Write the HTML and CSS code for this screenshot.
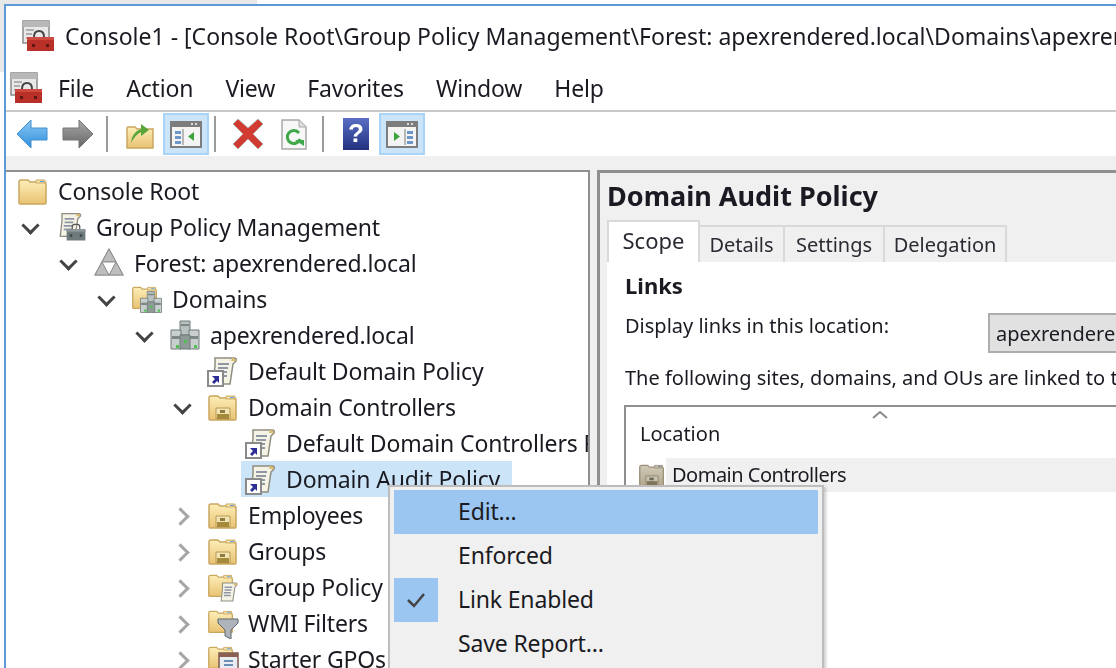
FILE: index.html
```html
<!DOCTYPE html>
<html lang="en">
<head>
  <meta charset="UTF-8" />
  <title>Console1 - Group Policy Management</title>
  <link rel="stylesheet" href="styles.css">
</head>
<body>
  <svg class="defs" width="0" height="0">
    <defs>
      <linearGradient id="folderFill" x1="0" y1="0" x2="0" y2="1">
        <stop offset="0" stop-color="#fdeeb8"/>
        <stop offset="1" stop-color="#e9c273"/>
      </linearGradient>
      <linearGradient id="blueArrow" x1="0" y1="0" x2="0" y2="1">
        <stop offset="0" stop-color="#8cc8f4"/>
        <stop offset="1" stop-color="#2f8fdc"/>
      </linearGradient>
      <linearGradient id="grayArrow" x1="0" y1="0" x2="0" y2="1">
        <stop offset="0" stop-color="#a8a8a8"/>
        <stop offset="1" stop-color="#666"/>
      </linearGradient>
      <linearGradient id="helpFill" x1="0" y1="0" x2="0" y2="1">
        <stop offset="0" stop-color="#5a6fc4"/>
        <stop offset="1" stop-color="#22307f"/>
      </linearGradient>
      <symbol id="folder" viewBox="0 0 32 32">
        <path d="M2 7q0-2 2-2h7l2 2h14q2 0 2 2v19q0 1-1 1H3q-1 0-1-1z" fill="url(#folderFill)" stroke="#c9a862" stroke-width="1.5"/>
        <path d="M19 5h9v3h-9z" fill="#f6e4ab" stroke="#c9a862"/>
        <path d="M23 6h4v1h-4z" fill="#5a9fe0"/>
      </symbol>
      <symbol id="ou" viewBox="0 0 32 32">
        <use href="#folder"/>
        <path d="M9 17h14v11H9z" fill="#f2e3b4" stroke="#b99c55"/>
        <path d="M10 23h12v5H10z" fill="#a58a3c"/>
        <path d="M13 19h5v3h-5z" fill="#8e7a3a"/>
      </symbol>
      <symbol id="servers" viewBox="0 0 32 32">
        <g stroke="#6f7a78" stroke-width="1">
          <path d="M11 2h10v14H11z" fill="#b9c0bf"/>
          <path d="M2 11h10v19H2z" fill="#c9cfce"/>
          <path d="M20 11h10v19H20z" fill="#c9cfce"/>
          <path d="M11 16h10v14H11z" fill="#8f9a98"/>
        </g>
        <path d="M3 17h8v3H3zM21 17h8v3h-8zM12 5h8v2h-8z" fill="#7d8886"/>
        <path d="M7 26h3v3H7zM25 26h3v3h-3zM15 21h3v3h-3z" fill="#4fc24f"/>
      </symbol>
      <symbol id="scroll" viewBox="0 0 32 32">
        <path d="M8 3h19q3 0 2 3l-3 3-3 20H6l2-18z" fill="#f5f3e6" stroke="#8d8d80" stroke-width="1.5"/>
        <path d="M25 3q4 0 4 3h-5z" fill="#d9b96a"/>
        <path d="M11 9h11M11 13h10M10 17h10M10 21h10" stroke="#8f97a5" stroke-width="2"/>
      </symbol>
      <symbol id="gpo-link" viewBox="0 0 32 32">
        <use href="#scroll"/>
        <path d="M1 16h15v15H1z" fill="#fff" stroke="#8a8a8a" stroke-width="2"/>
        <path d="M5 21h7v7l-2-2-3 3-2-2 3-3z" fill="#2d2d96"/>
      </symbol>
      <symbol id="toolbox" viewBox="0 0 32 32">
        <path d="M10 10V6q0-4 4-4h4q4 0 4 4v4" fill="none" stroke="#555" stroke-width="2"/>
        <path d="M1 10h30v18H1z" fill="#6f7a7c"/>
        <path d="M1 10h30v4H1z" fill="#8d9799"/>
        <path d="M6 18h4v4H6zM22 18h4v4h-4z" fill="#3c4446"/>
      </symbol>
      <symbol id="app" viewBox="0 0 32 32">
        <path d="M1 1h26v22H1z" fill="#e8e8e8" stroke="#8a8a8a" stroke-width="1.5"/>
        <path d="M1 1h26v6H1z" fill="#b8b8b8"/>
        <path d="M4 10h8M4 14h6M4 18h6" stroke="#9b9b9b" stroke-width="1.5"/>
        <path d="M12 17q0-6 5-6t5 6" fill="none" stroke="#444" stroke-width="2"/>
        <path d="M5 17h27v14H5z" fill="#b93029"/>
        <path d="M5 17h27v3H5z" fill="#cf4a40"/>
        <path d="M10 24h3v3h-3zM24 24h3v3h-3z" fill="#5e1714"/>
      </symbol>
      <symbol id="window" viewBox="0 0 32 28">
        <path d="M1 2h30v25H1z" fill="#f4f4f4" stroke="#7d7d7d" stroke-width="2"/>
        <path d="M1 2h30v5H1z" fill="#7d7d7d"/>
        <path d="M25 3h2v2h-2zM21 3h2v2h-2z" fill="#ddd"/>
      </symbol>
    </defs>
  </svg>

  <div class="backdrop"></div>

  <div class="window">
    <div class="titlebar">
      <svg class="icon-app"><use href="#app"/></svg>
      <span class="title">Console1 - [Console Root\Group Policy Management\Forest: apexrendered.local\Domains\apexrendered.local\Domain Controllers]</span>
    </div>

    <div class="menubar">
      <svg class="icon-app"><use href="#app"/></svg>
      <span>File</span>
      <span>Action</span>
      <span>View</span>
      <span>Favorites</span>
      <span>Window</span>
      <span>Help</span>
    </div>

    <div class="toolbar">
      <button class="tool">
        <svg width="32" height="30" viewBox="0 0 32 30"><path d="M1 15 15 1v8h16v12H15v8z" fill="url(#blueArrow)" stroke="#3f8fd2"/></svg>
      </button>
      <button class="tool">
        <svg width="32" height="30" viewBox="0 0 32 30"><path d="M31 15 17 1v8H1v12h16v8z" fill="url(#grayArrow)" stroke="#777"/></svg>
      </button>
      <span class="sep"></span>
      <button class="tool">
        <svg width="28" height="30" viewBox="0 0 28 30">
          <path d="M1 9q0-1 1-1h7l2 2h16v19H1z" fill="url(#folderFill)" stroke="#c9a862" stroke-width="1.5"/>
          <path d="M5 24q1-11 10-14V5l8 6-8 6v-4q-5 2-10 11z" fill="#58a63a"/>
        </svg>
      </button>
      <button class="tool on">
        <svg width="32" height="28" viewBox="0 0 32 28">
          <use href="#window" width="32" height="28"/>
          <path d="M5 11h6v3H5zM5 16h6v3H5zM5 21h6v3H5z" fill="#6d97c9"/>
          <path d="M13 9v16" stroke="#7d7d7d"/>
          <path d="M24 12v9l-6-4.500z" fill="#3da33d"/>
        </svg>
      </button>
      <span class="sep"></span>
      <button class="tool">
        <svg width="32" height="32" viewBox="0 0 32 32"><path d="M6 1 16 10 26 1l5 5-10 10 10 10-5 5-10-10L6 31l-5-5 10-10L1 6z" fill="#d23a32" stroke="#b5b0a8" stroke-width="1"/></svg>
      </button>
      <button class="tool">
        <svg width="26" height="31" viewBox="0 0 26 31">
          <path d="M1 1h17l7 7v22H1z" fill="#f7f7f7" stroke="#a9a9a9" stroke-width="1.5"/>
          <path d="M18 1v7h7" fill="#ddd" stroke="#a9a9a9"/>
          <path d="M19 20a6.500 6.500 0 1 1-1-6" fill="none" stroke="#3fa84a" stroke-width="3"/>
          <path d="M14 21h9v6z" fill="#3fa84a"/>
        </svg>
      </button>
      <span class="sep"></span>
      <button class="tool">
        <svg width="26" height="32" viewBox="0 0 26 32">
          <path d="M0 0h26v32H0z" fill="url(#helpFill)"/>
          <text class="help-mark" x="13" y="24">?</text>
        </svg>
      </button>
      <button class="tool on">
        <svg width="32" height="28" viewBox="0 0 32 28">
          <use href="#window" width="32" height="28"/>
          <path d="M21 11h6v3h-6zM21 16h6v3h-6zM21 21h6v3h-6z" fill="#6d97c9"/>
          <path d="M19 9v16" stroke="#7d7d7d"/>
          <path d="M8 12v9l6-4.500z" fill="#3da33d"/>
        </svg>
      </button>
    </div>

    <div class="strip"></div>

    <div class="panes">
      <div class="tree-pane">
        <ul class="tree">
          <li>
            <div class="row root"><svg class="icon"><use href="#folder"/></svg><span class="label">Console Root</span></div>
            <ul class="top">
              <li>
                <div class="row"><span class="arrow open"></span>
                  <svg class="icon" viewBox="0 0 32 32"><use href="#scroll" width="28" height="28"/><use href="#toolbox" x="10" y="12" width="22" height="20"/></svg>
                  <span class="label">Group Policy Management</span></div>
                <ul>
                  <li>
                    <div class="row"><span class="arrow open"></span>
                      <svg class="icon" viewBox="0 0 32 32">
                        <path d="M16 2 30 28H2z" fill="#d9d9d9" stroke="#8f8f8f" stroke-width="1.200"/>
                        <path d="M16 2 23 15H9zM9 15 16 28H2zM23 15 30 28H16z" fill="#bdbdbd" stroke="#8f8f8f"/>
                        <path d="M9 15h14L16 28z" fill="#fff" stroke="#8f8f8f"/>
                      </svg>
                      <span class="label">Forest: apexrendered.local</span></div>
                    <ul>
                      <li>
                        <div class="row"><span class="arrow open"></span>
                          <svg class="icon" viewBox="0 0 32 32"><use href="#folder" width="28" height="28"/><use href="#servers" x="8" y="6" width="24" height="26"/></svg>
                          <span class="label">Domains</span></div>
                        <ul>
                          <li>
                            <div class="row"><span class="arrow open"></span>
                              <svg class="icon"><use href="#servers"/></svg>
                              <span class="label">apexrendered.local</span></div>
                            <ul>
                              <li>
                                <div class="row"><span class="arrow none"></span>
                                  <svg class="icon"><use href="#gpo-link"/></svg>
                                  <span class="label">Default Domain Policy</span></div>
                              </li>
                              <li>
                                <div class="row"><span class="arrow open"></span>
                                  <svg class="icon"><use href="#ou"/></svg>
                                  <span class="label">Domain Controllers</span></div>
                                <ul>
                                  <li>
                                    <div class="row"><span class="arrow none"></span>
                                      <svg class="icon"><use href="#gpo-link"/></svg>
                                      <span class="label">Default Domain Controllers Policy</span></div>
                                  </li>
                                  <li>
                                    <div class="row"><span class="arrow none"></span>
                                      <div class="selected"><svg class="icon"><use href="#gpo-link"/></svg>
                                      <span class="label">Domain Audit Policy</span></div></div>
                                  </li>
                                </ul>
                              </li>
                              <li>
                                <div class="row"><span class="arrow"></span>
                                  <svg class="icon"><use href="#ou"/></svg>
                                  <span class="label">Employees</span></div>
                              </li>
                              <li>
                                <div class="row"><span class="arrow"></span>
                                  <svg class="icon"><use href="#ou"/></svg>
                                  <span class="label">Groups</span></div>
                              </li>
                              <li>
                                <div class="row"><span class="arrow"></span>
                                  <svg class="icon" viewBox="0 0 32 32"><use href="#folder" width="28" height="28"/><use href="#scroll" x="10" y="10" width="22" height="22"/></svg>
                                  <span class="label">Group Policy Objects</span></div>
                              </li>
                              <li>
                                <div class="row"><span class="arrow"></span>
                                  <svg class="icon" viewBox="0 0 32 32">
                                    <use href="#folder" width="28" height="28"/>
                                    <path d="M11 12h20v4l-7 7v9l-6-3v-6l-7-7z" fill="#aeb4ba" stroke="#5f666d"/>
                                  </svg>
                                  <span class="label">WMI Filters</span></div>
                              </li>
                              <li>
                                <div class="row"><span class="arrow"></span>
                                  <svg class="icon" viewBox="0 0 32 32">
                                    <use href="#folder" width="28" height="28"/>
                                    <path d="M12 10h19v22H12z" fill="#e9edf2" stroke="#7a5a50" stroke-width="1.500"/>
                                    <path d="M12 10h19v4H12z" fill="#8a5f52"/>
                                    <path d="M17 18h9M17 22h9M17 26h9" stroke="#6d8fb5" stroke-width="2"/>
                                  </svg>
                                  <span class="label">Starter GPOs</span></div>
                              </li>
                            </ul>
                          </li>
                        </ul>
                      </li>
                    </ul>
                  </li>
                </ul>
              </li>
            </ul>
          </li>
        </ul>
      </div>

      <div class="detail-pane">
        <h1 class="detail-title">Domain Audit Policy</h1>
        <div class="tabs">
          <span class="tab active">Scope</span>
          <span class="tab tab-details">Details</span>
          <span class="tab tab-settings">Settings</span>
          <span class="tab tab-delegation">Delegation</span>
        </div>
        <div class="tab-body">
          <h2 class="links-title">Links</h2>
          <div class="location-row">
            <span class="location-label">Display links in this location:</span>
            <span class="combo">apexrendered.local</span>
          </div>
          <p class="linked-note">The following sites, domains, and OUs are linked to this GPO:</p>
          <div class="list">
            <div class="list-head">
              <svg class="sort-caret" width="16" height="8" viewBox="0 0 16 8"><path d="M1 7 8 1l7 6" fill="none" stroke="#8a8a8a" stroke-width="2"/></svg>
              <span>Location</span>
            </div>
            <div class="list-row">
              <svg class="list-icon"><use href="#ou"/></svg>
              <span class="list-cell">Domain Controllers</span>
            </div>
          </div>
        </div>
      </div>
    </div>
  </div>

  <div class="context-menu">
    <div class="item current">Edit...</div>
    <div class="item">Enforced</div>
    <div class="item"><span class="check"><svg width="20" height="16" viewBox="0 0 20 16"><path d="M2 8l6 6L18 2" fill="none" stroke="#444" stroke-width="2.500"/></svg></span>Link Enabled</div>
    <div class="item">Save Report...</div>
  </div>
</body>
</html>
```

FILE: styles.css
```css
* {
  box-sizing: border-box;
}

html, body {
  height: 668px;
  margin: 0;
  overflow: hidden;
}

body {
  background-color: #fff;
  color: #1a1a22;
  font-family: "Noto Sans", sans-serif;
  font-size: 23px;
  letter-spacing: -0.15px;
}

.defs {
  display: block;
}

.backdrop {
  position: absolute;
  left: 0;
  top: 0;
  width: 257px;
  height: 72px;
  background-color: #e8e8e8;
}

.window {
  position: relative;
  height: 664px;
  margin: 4px 0 0 4px;
  border-top: 2px solid #5a9ad8;
  border-left: 2px solid #5a9ad8;
  background-color: #fff;
  overflow: hidden;
  filter: blur(0.35px);
}

.titlebar {
  display: flex;
  align-items: center;
  height: 60px;
  padding-left: 16px;
  white-space: nowrap;
  letter-spacing: 0;
}

.titlebar .icon-app {
  margin-right: 11px;
}

.icon-app {
  flex: none;
  width: 32px;
  height: 32px;
}

.menubar {
  display: flex;
  align-items: center;
  gap: 32px;
  height: 46px;
  padding-left: 4px;
  border-bottom: 2px solid #c8c8c8;
}

.menubar .icon-app {
  margin-right: -16px;
}

.toolbar {
  display: flex;
  align-items: center;
  height: 44px;
  padding-left: 3px;
}

.tool {
  display: flex;
  align-items: center;
  justify-content: center;
  width: 46px;
  height: 42px;
  padding: 0;
  border: 2px solid transparent;
  background: none;
}

.tool.on {
  border-color: #a8d4fa;
  background-color: #cce4f7;
}

.sep {
  width: 2px;
  height: 36px;
  margin: 0 9px 0 5px;
  background-color: #9a9a9a;
}

.strip {
  height: 14px;
  background-color: #f0f0f0;
}

.panes {
  display: flex;
  height: 498px;
  background-color: #f0f0f0;
}

.tree-pane {
  flex: none;
  width: 584px;
  height: 100%;
  border-top: 2px solid #8f8f8f;
  border-right: 2px solid #8f8f8f;
  background-color: #fff;
  overflow: hidden;
}

.tree, .tree ul {
  margin: 0;
  padding: 0 0 0 38px;
  list-style: none;
}

.tree {
  padding: 1px 0 0 12px;
}

.tree .top {
  padding-left: 0;
}

.row {
  display: flex;
  align-items: center;
  height: 36px;
  white-space: nowrap;
}

.arrow {
  flex: none;
  position: relative;
  width: 38px;
  height: 36px;
}

.arrow::after {
  content: "";
  position: absolute;
  left: 4px;
  top: 13px;
  width: 10px;
  height: 10px;
  border-top: 3px solid #a6a6a6;
  border-right: 3px solid #a6a6a6;
  transform: rotate(45deg);
}

.arrow.open::after {
  left: 6px;
  top: 10px;
  border-color: #444;
  transform: rotate(135deg);
}

.arrow.none::after {
  display: none;
}

.icon {
  flex: none;
  width: 32px;
  height: 32px;
  margin: 0 9px 0 -1px;
}

.selected {
  display: flex;
  align-items: center;
  height: 36px;
  margin-left: -5px;
  padding: 0 12px 0 5px;
  background-color: #cce4f7;
}

.detail-pane {
  flex: 1;
  min-width: 0;
  height: 100%;
  margin-left: 7px;
  padding-left: 7px;
  border-top: 3px solid #8f8f8f;
  border-left: 3px solid #8f8f8f;
  white-space: nowrap;
  font-size: 20px;
  letter-spacing: 0;
}

.detail-title {
  height: 46px;
  margin: 0;
  font-size: 27px;
  font-weight: 700;
  line-height: 46px;
}

.tabs {
  display: flex;
  align-items: flex-end;
  height: 43px;
}

.tab {
  display: flex;
  align-items: center;
  justify-content: center;
  height: 37px;
  border: 2px solid #d9d9d9;
  border-bottom: 0;
  border-left: 0;
  color: #2a2a33;
}

.tab.active {
  width: 93px;
  height: 42px;
  padding-bottom: 5px;
  border-left: 2px solid #d9d9d9;
  background-color: #fff;
  font-size: 22px;
}

.tab-details {
  width: 85px;
}

.tab-settings {
  width: 100px;
}

.tab-delegation {
  width: 122px;
}

.tab-body {
  height: 420px;
  padding: 6px 0 0 18px;
  background-color: #fff;
}

.links-title {
  height: 34px;
  margin: 0;
  font-size: 22px;
  font-weight: 700;
  line-height: 34px;
}

.location-row {
  display: flex;
  align-items: center;
  height: 52px;
  margin: 5px 0 2px;
}

.location-label {
  flex: none;
  width: 363px;
  margin-top: -16px;
}

.combo {
  flex: none;
  width: 300px;
  height: 40px;
  padding-left: 6px;
  border: 2px solid #adadad;
  background-color: #e1e1e1;
  line-height: 38px;
}

.linked-note {
  height: 34px;
  margin: 0;
  line-height: 34px;
}

.list {
  position: relative;
  height: 200px;
  margin: 10px 0 0 -1px;
  border-top: 2px solid #8f8f8f;
  border-left: 2px solid #8f8f8f;
}

.sort-caret {
  position: absolute;
  left: 246px;
  top: 4px;
}

.list-head {
  height: 51px;
  padding: 10px 0 0 14px;
  line-height: 34px;
}

.list-row {
  display: flex;
  align-items: center;
  height: 34px;
}

.list-icon {
  flex: none;
  width: 28px;
  height: 30px;
  margin-left: 12px;
  filter: saturate(0.4) brightness(0.85);
}

.list-cell {
  flex: 1;
  height: 34px;
  padding-left: 6px;
  background-color: #f0f0f0;
  line-height: 34px;
  letter-spacing: -0.5px;
}

.context-menu {
  position: absolute;
  left: 388px;
  top: 485px;
  width: 436px;
  height: 200px;
  padding: 3px 4px;
  border: 2px solid #bdbdbd;
  background-color: #f0f0f0;
  box-shadow: 2px 2px 3px rgba(0, 0, 0, 0.2);
}

.item {
  position: relative;
  height: 44px;
  padding-left: 64px;
  line-height: 42px;
}

.item.current {
  background-color: #9ac6f1;
}

.check {
  position: absolute;
  left: 0;
  top: 0;
  display: flex;
  align-items: center;
  justify-content: center;
  width: 44px;
  height: 44px;
  background-color: #9ac6f1;
}

.help-mark {
  fill: #fff;
  font-family: "Liberation Sans", sans-serif;
  font-size: 26px;
  font-weight: 700;
  text-anchor: middle;
}
```
